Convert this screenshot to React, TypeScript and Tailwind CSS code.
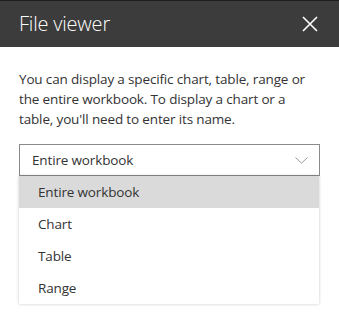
const items = ["Entire workbook", "Chart", "Table", "Range"];

export default function App() {
  return (
    <div className="w-[339px] h-[315px] bg-white font-['Open_Sans','Noto_Sans',sans-serif] overflow-hidden">
      {/* Header bar */}
      <div className="h-[47px] bg-[#3c3c3c] border-t border-[#1e1e1e] flex items-center justify-between pl-[19px] pr-[21px]">
        <span className="text-white text-[20px] font-light leading-none tracking-[-0.2px]">File viewer</span>
        <svg width="16" height="16" viewBox="0 0 16 16" className="text-white">
          <path d="M1 1 L15 15 M15 1 L1 15" stroke="currentColor" strokeWidth="1.6" fill="none" />
        </svg>
      </div>

      <div className="px-[19px] pt-[22px]">
        <p className="text-[13.5px] leading-[20px] text-[#333333] tracking-[-0.15px] whitespace-nowrap">
          You can display a specific chart, table, range or
          <br />
          the entire workbook. To display a chart or a
          <br />
          table, you'll need to enter its name.
        </p>

        {/* Select box */}
        <div className="mt-[15px] h-[32px] border border-[#8a8a8a] flex items-center justify-between pl-[12px] pr-[11px]">
          <span className="text-[13.5px] text-[#333333] tracking-[-0.15px]">Entire workbook</span>
          <svg width="13" height="7" viewBox="0 0 13 7">
            <path d="M0.5 0.5 L6.5 6.2 L12.5 0.5" stroke="#9a9a9a" strokeWidth="1" fill="none" />
          </svg>
        </div>

        {/* Open menu */}
        <div className="w-[300px] bg-white shadow-[0_0_3px_rgba(0,0,0,0.22)]">
          {items.map((item, i) => (
            <div
              key={item}
              className={
                i === 0
                  ? "h-[32px] flex items-center pl-[19px] bg-[#dadada] text-[13.5px] text-[#333333] tracking-[-0.15px]"
                  : "h-[32px] flex items-center pl-[19px] text-[13.5px] text-[#333333] tracking-[-0.15px]"
              }
            >
              {item}
            </div>
          ))}
        </div>
      </div>
    </div>
  );
}
